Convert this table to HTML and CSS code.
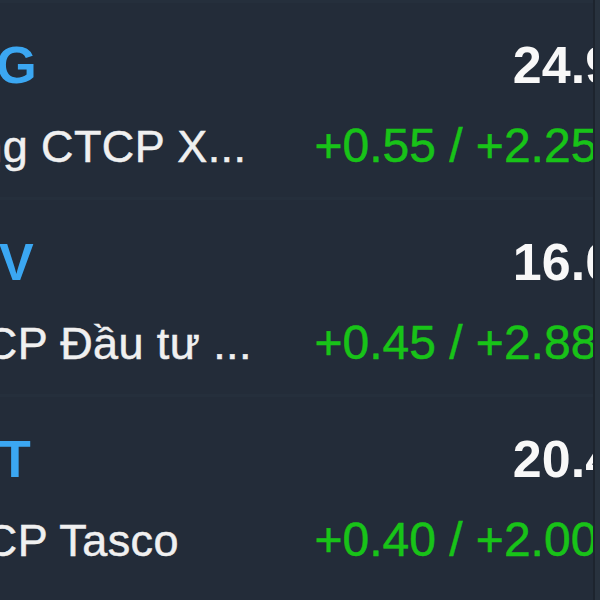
FILE: index.html
```html
<!DOCTYPE html>
<html lang="vi">
<head>
<meta charset="utf-8">
<title>Bảng giá</title>
<link rel="stylesheet" href="styles.css">
</head>
<body>
<div class="wrap">
  <div class="viewport">
    <div class="list">
      <div class="row">
        <div class="line1"><span class="ticker">VCG</span><span class="price">24.95</span></div>
        <div class="line2"><span class="name">Tổng CTCP X...</span><span class="change">+0.55 / +2.25%</span></div>
      </div>
      <div class="row">
        <div class="line1"><span class="ticker">HHV</span><span class="price">16.05</span></div>
        <div class="line2"><span class="name">CTCP Đầu tư ...</span><span class="change">+0.45 / +2.88%</span></div>
      </div>
      <div class="row">
        <div class="line1"><span class="ticker">HUT</span><span class="price">20.40</span></div>
        <div class="line2"><span class="name">CTCP Tasco</span><span class="change">+0.40 / +2.00%</span></div>
      </div>
    </div>
  </div>
  <div class="edge"></div>
  <div class="track"></div>
</div>
</body>
</html>
```
FILE: styles.css
```css
html, body {
  margin: 0;
  padding: 0;
  background: #232c39;
  overflow: hidden;
}
body {
  font-family: "Liberation Sans", Arial, sans-serif;
}
.wrap {
  display: flex;
  height: 600px;
  width: 600px;
}
.viewport {
  flex: 0 0 593px;
  overflow: hidden;
}
.list {
  margin-left: -76px;
  width: 716px;
}
.row {
  box-sizing: border-box;
  height: 197px;
  border-top: 3px solid #252f3c;
  padding-top: 22px;
}
.line1 {
  display: flex;
  justify-content: space-between;
  align-items: baseline;
  height: 81px;
}
.line2 {
  display: flex;
  justify-content: space-between;
  align-items: baseline;
}
.ticker {
  font-size: 52px;
  font-weight: 700;
  line-height: 80px;
  color: #3ba7f2;
}
.price {
  font-size: 52px;
  font-weight: 700;
  line-height: 80px;
  color: #f8f8f8;
  margin-right: -3px;
}
.name {
  font-size: 45px;
  line-height: 80px;
  color: #f0f0f0;
  white-space: nowrap;
  letter-spacing: 0.4px;
  -webkit-text-stroke: 0.5px currentColor;
}
.change {
  font-size: 48px;
  line-height: 80px;
  color: #18c318;
  white-space: nowrap;
  -webkit-text-stroke: 0.5px currentColor;
}
.edge {
  flex: 0 0 2px;
  background: #1d242e;
}
.track {
  flex: 1 1 auto;
  background: #28323e;
}
```
